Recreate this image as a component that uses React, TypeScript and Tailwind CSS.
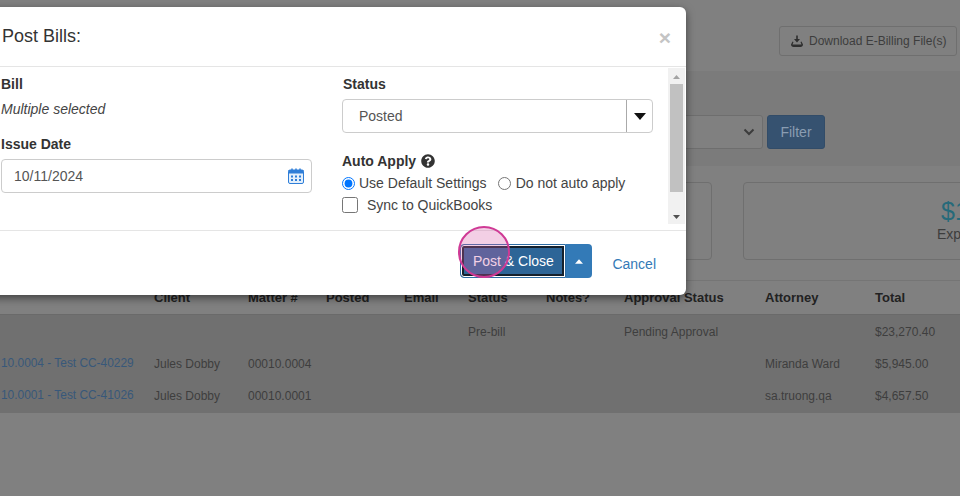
import { FaQuestionCircle } from "react-icons/fa";

const cols = "grid grid-cols-[154px_94px_78px_78px_64px_78px_78px_141px_110px_85px]";

function Row({ cells, link }: { cells: string[]; link?: boolean }) {
  return (
    <div className={`${cols} h-8 items-center text-xs text-[#3e3e3e]`}>
      {cells.map((c, i) => (
        <div key={i} className={`whitespace-nowrap ${i === 0 && link ? "pl-px text-[11.9px] text-[#38587a]" : ""}`}>
          {c}
        </div>
      ))}
    </div>
  );
}

function Caret({ className }: { className: string }) {
  return (
    <svg width="12" height="7" viewBox="0 0 12 7" className={className}>
      <path d="M0 0h12L6 7z" fill="currentColor" />
    </svg>
  );
}

export default function App() {
  return (
    <div className="relative w-[960px] h-[496px] overflow-hidden bg-[#808080] font-['Liberation_Sans',Arial,sans-serif]">
      {/* page behind the backdrop */}
      <div className="flex justify-end pt-[26px] pr-[3px] h-[71px]">
        <div className="flex items-center h-[30px] w-[178px] pl-[10px] gap-[5px] border border-[#6f6f6f] rounded-[3px] text-xs text-[#3d3d3d]">
          <svg width="14" height="13" viewBox="0 0 14 13">
            <path d="M6.200 0.500h1.600v3.500H10L7 7.500 4 4h2.200z" fill="#2e2e2e" />
            <path d="M2.500 6.500L1 9.500c0 1.500 1 2.500 2.500 2.500h7c1.500 0 2.500-1 2.500-2.500l-1.500-3-1 .5 1 2.500H2.500l1-2.500z" fill="#2e2e2e" />
          </svg>
          <span>Download E-Billing File(s)</span>
        </div>
      </div>
      <div className="h-[95px] bg-[#7b7b7b] flex items-start justify-end pt-11 pr-[135px] gap-1">
        <div className="w-[120px] h-[34px] border border-[#6e6e6e] bg-[#808080] rounded-[3px] flex items-center justify-end pr-[7px]">
          <svg width="12" height="8" viewBox="0 0 12 8">
            <path d="M1.500 1.500L6 6l4.500-4.500" fill="none" stroke="#3c3c3c" strokeWidth="2" />
          </svg>
        </div>
        <div className="w-[58px] h-[34px] rounded-[3px] bg-[#365270] border border-[#324c68] flex items-center justify-center text-sm text-[#8a9db2]">
          Filter
        </div>
      </div>
      <div className="flex h-[115px] pt-4 pl-[600px] gap-[31px] border-b border-[#757575]">
        <div className="w-[112px] shrink-0 h-[78px] border border-[#6f6f6f] rounded-[4px]" />
        <div className="w-[300px] shrink-0 h-[78px] border border-[#6f6f6f] rounded-[4px] pl-[193px] pt-[14px]">
          <div className="text-[25px] leading-[28px] pl-1 text-[#276a7a]">$1</div>
          <div className="text-sm leading-[18px] text-[#3d3d3d]">Expenses</div>
        </div>
      </div>
      <div className={`${cols} h-[33px] items-center text-[13px] font-bold text-[#222222]`}>
        <div />
        <div>Client</div>
        <div>Matter #</div>
        <div>Posted</div>
        <div>Email</div>
        <div>Status</div>
        <div>Notes?</div>
        <div>Approval Status</div>
        <div>Attorney</div>
        <div>Total</div>
      </div>
      <div className="bg-[#707070] border-t border-[#6a6a6a] pt-px pb-px">
        <Row cells={["", "", "", "", "", "Pre-bill", "", "Pending Approval", "", "$23,270.40"]} />
        <Row link cells={["10.0004 - Test CC-40229", "Jules Dobby", "00010.0004", "", "", "", "", "", "Miranda Ward", "$5,945.00"]} />
        <Row link cells={["10.0001 - Test CC-41026", "Jules Dobby", "00010.0001", "", "", "", "", "", "sa.truong.qa", "$4,657.50"]} />
      </div>

      {/* modal */}
      <div className="absolute left-[-14px] top-[7px] w-[700px] h-[288px] bg-white rounded-md shadow-[0_3px_9px_rgba(0,0,0,0.5)] flex flex-col text-[#333333]">
        <div className="h-[60px] shrink-0 border-b border-[#e5e5e5] flex items-center justify-between pl-4 pr-[15px]">
          <span className="text-[18px] text-[#333333]">Post Bills:</span>
          <span className="text-[21px] font-bold leading-none mt-px text-[#c4c4c4]">×</span>
        </div>
        <div className="h-[164px] shrink-0 border-b border-[#e5e5e5] flex">
          <div className="flex-1 flex pl-[15px] pt-2 gap-[30px]">
            <div className="w-[311px]">
              <div className="text-sm font-bold leading-4 mt-[1px]">Bill</div>
              <div className="text-sm italic leading-5 mt-[7px] text-[#444444]">Multiple selected</div>
              <div className="text-sm font-bold leading-4 mt-[17px]">Issue Date</div>
              <div className="mt-[7px] h-[34px] border border-[#cccccc] rounded-[4px] flex items-center justify-between pl-3 pr-[7px] text-sm text-[#555555]">
                <span>10/11/2024</span>
                <svg width="16" height="16" viewBox="0 0 16 16">
                  <rect x="0.500" y="2" width="15" height="13.500" rx="1.500" fill="#e3effb" stroke="#2f7ed8" />
                  <rect x="0.500" y="2" width="15" height="3.500" fill="#2f7ed8" />
                  <path d="M4 0.500v3M8 0.500v3M12 0.500v3" stroke="#2f7ed8" strokeWidth="1.500" />
                  <path d="M3 7.500h2v2H3zM7 7.500h2v2H7zM11 7.500h2v2h-2zM3 11h2v2H3zM7 11h2v2H7zM11 11h2v2h-2z" fill="#2f7ed8" />
                </svg>
              </div>
            </div>
            <div className="w-[311px]">
              <div className="text-sm font-bold leading-4 mt-[1px] ml-px">Status</div>
              <div className="mt-[7px] h-[34px] border border-[#cccccc] rounded-[4px] flex items-center text-sm text-[#555555]">
                <span className="flex-1 pl-4">Posted</span>
                <div className="w-[26px] h-full border-l border-[#aaaaaa] flex items-center justify-center">
                  <Caret className="text-[#111111]" />
                </div>
              </div>
              <div className="flex items-center gap-[5px] mt-5 text-sm font-bold leading-4">
                <span>Auto Apply</span>
                <FaQuestionCircle className="text-[14px] text-[#333333]" />
              </div>
              <div className="flex items-center h-[22px] mt-[3px] text-sm text-[#444444]">
                <input type="radio" name="auto" defaultChecked className="w-[13px] h-[13px] m-0" />
                <span className="ml-[4px]">Use Default Settings</span>
                <input type="radio" name="auto" className="w-[13px] h-[13px] m-0 ml-[11px]" />
                <span className="ml-[5px]">Do not auto apply</span>
              </div>
              <div className="flex items-center h-[22px] text-sm text-[#444444]">
                <input type="checkbox" className="w-4 h-4 m-0" />
                <span className="ml-[9px]">Sync to QuickBooks</span>
              </div>
            </div>
          </div>
          <div className="w-[17px] shrink-0 h-[156px] mt-px mr-px bg-[#f1f1f1] flex flex-col items-center justify-between">
            <svg width="9" height="16" viewBox="0 0 9 16"><path d="M1 11l3.500-4L8 11z" fill="#a3a3a3" /></svg>
            <div className="w-[13px] flex-1 flex flex-col">
              <div className="h-[108px] bg-[#c1c1c1]" />
            </div>
            <svg width="9" height="15" viewBox="0 0 9 15"><path d="M1 6l3.500 4L8 6z" fill="#505050" /></svg>
          </div>
        </div>
        <div className="flex-1 flex items-start justify-end pt-[13px] pr-[30px]">
          <div className="flex h-[34px]">
            <div className="w-[106px] h-[34px] pb-px rounded-l-[4px] bg-[#2d6597] border border-[#2e6da4] flex items-center justify-center text-sm text-white shadow-[inset_0_0_0_1px_#ffffff,inset_0_0_0_3px_#14202c]">
              Post &amp; Close
            </div>
            <div className="w-[26px] h-[34px] rounded-r-[4px] bg-[#337ab7] flex items-center justify-center">
              <Caret className="w-2 h-[5px] rotate-180 text-white" />
            </div>
          </div>
          <span className="ml-[20px] mt-[10px] text-sm text-[#337ab7]">Cancel</span>
        </div>
      </div>

      {/* click highlight */}
      <div className="absolute left-[458px] top-[226px] w-[52px] h-[52px] rounded-full border-2 border-[#cf3a95] bg-[#d860a8]/30" />
    </div>
  );
}
